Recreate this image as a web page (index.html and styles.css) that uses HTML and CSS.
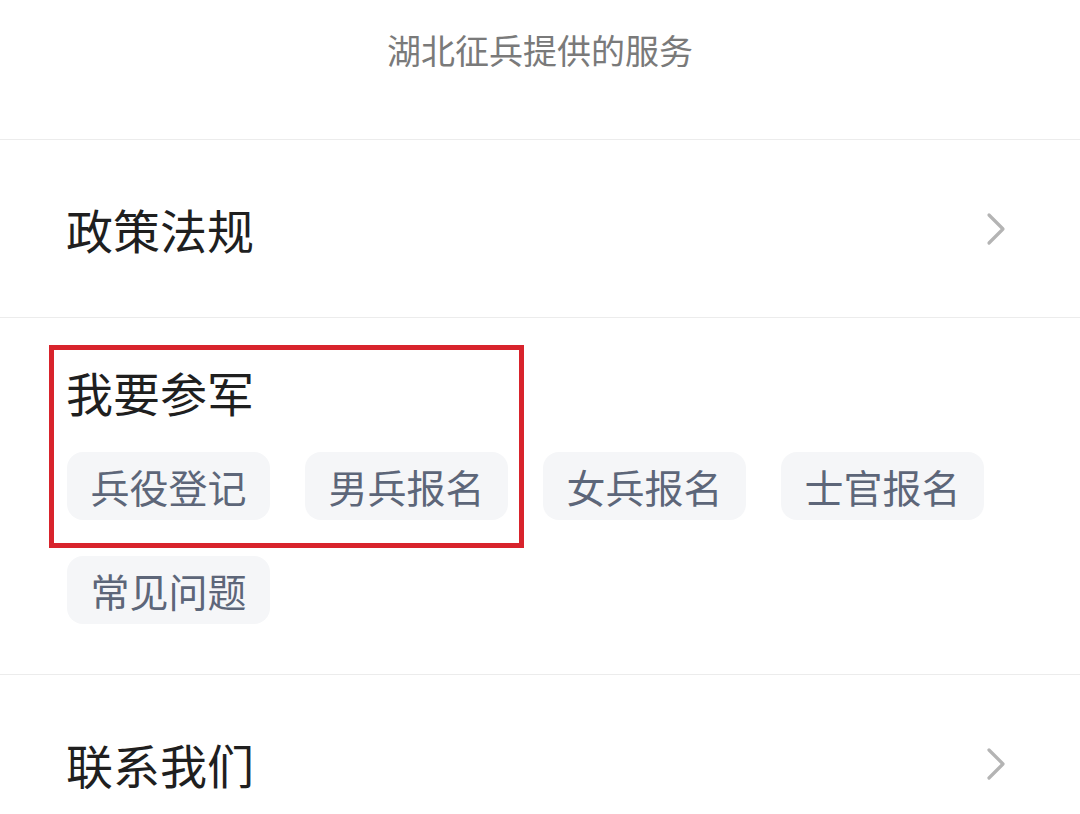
FILE: index.html
```html
<!DOCTYPE html>
<html lang="zh-CN">
<head>
    <meta charset="UTF-8">
    <meta name="viewport" content="width=device-width, initial-scale=1.0">
    <title>湖北征兵提供的服务</title>
    <link rel="stylesheet" href="styles.css">
</head>
<body>
    <div class="page">
        <div class="header">湖北征兵提供的服务</div>

        <div class="row">
            <span class="row-title">政策法规</span>
            <svg class="chevron" width="20" height="34" viewBox="0 0 20 34">
                <polyline points="3,3 17,17 3,31" fill="none" stroke="#b4b4b4" stroke-width="3.2" stroke-linecap="round" stroke-linejoin="round"/>
            </svg>
        </div>

        <div class="section">
            <div class="row-title">我要参军</div>
            <div class="tags">
                <span class="tag">兵役登记</span>
                <span class="tag">男兵报名</span>
                <span class="tag">女兵报名</span>
                <span class="tag">士官报名</span>
                <span class="tag">常见问题</span>
            </div>
            <div class="highlight"></div>
        </div>

        <div class="row">
            <span class="row-title">联系我们</span>
            <svg class="chevron" width="20" height="34" viewBox="0 0 20 34">
                <polyline points="3,3 17,17 3,31" fill="none" stroke="#b4b4b4" stroke-width="3.2" stroke-linecap="round" stroke-linejoin="round"/>
            </svg>
        </div>
    </div>
</body>
</html>
```

FILE: styles.css
```css
body {
    margin: 0;
    background: #fff;
    font-family: 'Noto Sans CJK SC', 'Noto Sans', sans-serif;
}

.page {
    width: 1080px;
}

.header {
    height: 140px;
    box-sizing: border-box;
    padding-top: 27px;
    text-align: center;
    font-size: 34px;
    line-height: 46px;
    color: #7a7a7a;
    border-bottom: 1px solid #ececec;
}

.row {
    height: 178px;
    box-sizing: border-box;
    display: flex;
    align-items: center;
    justify-content: space-between;
    padding: 0 74px 0 66px;
    border-bottom: 1px solid #ececec;
}

.row-title {
    font-size: 47px;
    line-height: 56px;
    color: #1f1f1f;
}

.chevron {
    display: block;
}

.section {
    position: relative;
    padding: 46px 67px 50px 67px;
    border-bottom: 1px solid #ececec;
}

.section .row-title {
    margin-left: -1px;
}

.tags {
    display: flex;
    flex-wrap: wrap;
    column-gap: 35px;
    row-gap: 36px;
    margin-top: 32px;
    width: 960px;
}

.tag {
    width: 203px;
    height: 68px;
    box-sizing: border-box;
    display: flex;
    align-items: center;
    justify-content: center;
    background: #f5f6f8;
    border-radius: 16px;
    font-size: 39px;
    color: #5d6679;
}

.highlight {
    position: absolute;
    left: 49px;
    top: 27px;
    width: 475px;
    height: 203px;
    box-sizing: border-box;
    border: 5px solid #d8232c;
}
```
